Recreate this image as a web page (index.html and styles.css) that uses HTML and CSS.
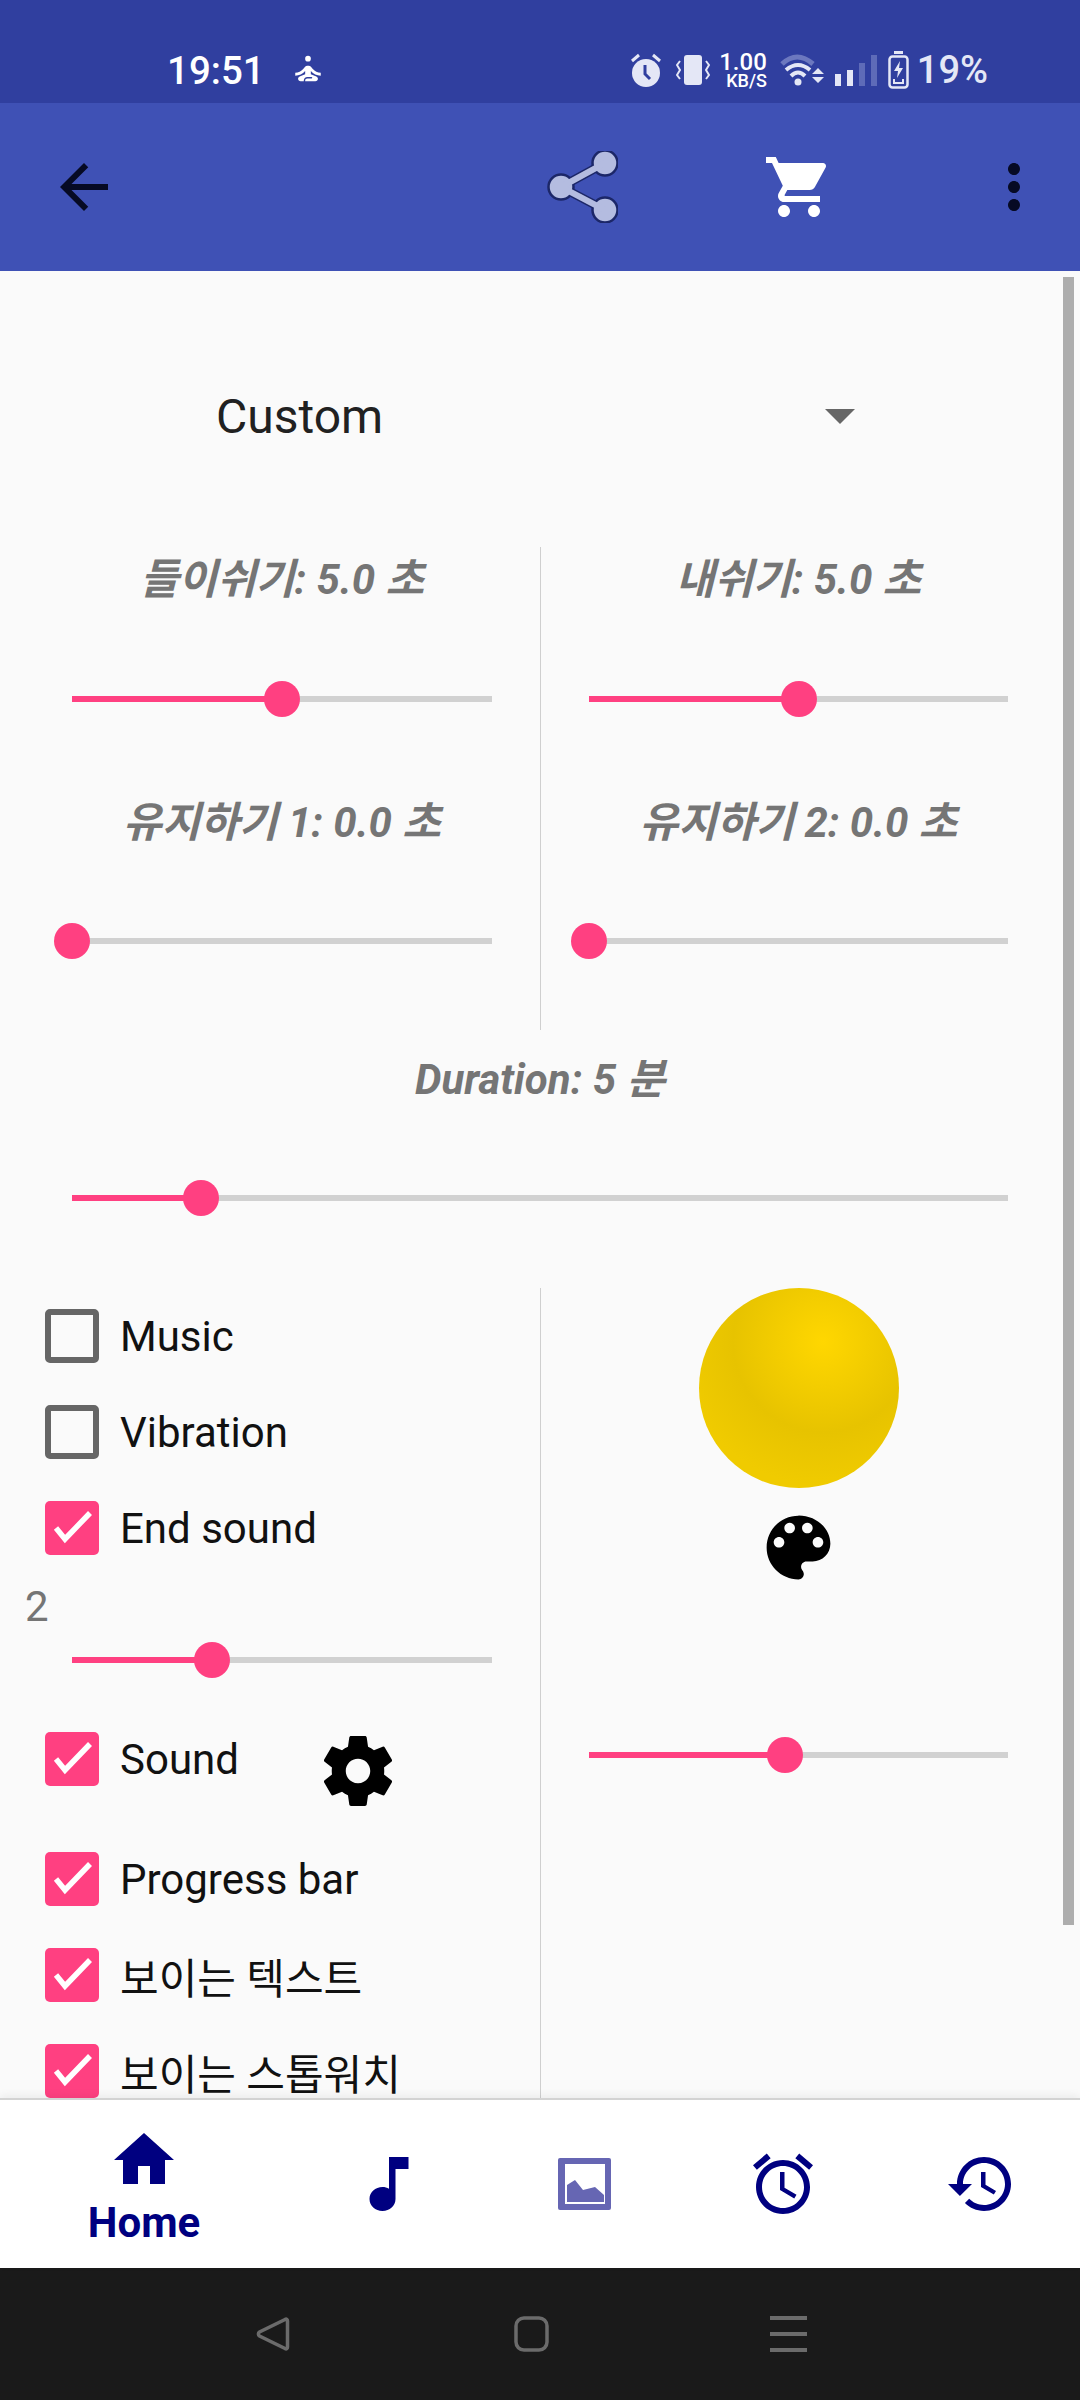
FILE: index.html
```html
<!DOCTYPE html>
<html lang="ko">
<head>
    <meta charset="UTF-8">
    <meta name="viewport" content="width=device-width, initial-scale=1.0">
    <title>Breathing</title>
    <link rel="stylesheet" href="styles.css">
</head>
<body>
    <div class="status">
        <div class="status-left">
            <span class="time">19:51</span>
            <svg class="ic-yoga" viewBox="0 0 24 24"><circle cx="12" cy="4" r="2"/><path d="M21 16v-2c-2.24 0-4.16-.96-5.6-2.68l-1.34-1.6C13.68 9.26 13.12 9 12.53 9h-1.05c-.59 0-1.15.26-1.53.72l-1.34 1.6C7.16 13.04 5.24 14 3 14v2c2.77 0 5.19-1.17 7-3.25V15l-3.88 1.55c-.67.27-1.12.93-1.12 1.66C5 19.2 5.8 20 6.79 20H9v-.5c0-1.38 1.12-2.5 2.5-2.5h3c.28 0 .5.22.5.5s-.22.5-.5.5h-3c-.83 0-1.5.67-1.5 1.5v.5h7.21c.99 0 1.79-.8 1.79-1.79 0-.73-.45-1.39-1.12-1.66L14 15v-2.25c1.81 2.08 4.23 3.25 7 3.25z"/></svg>
        </div>
        <div class="status-right">
            <svg class="ic-alarm" viewBox="0 0 32 34"><circle cx="16" cy="20" r="14"/><path d="M2 8l7-6M30 8l-7-6" fill="none" stroke="#e4e7f6" stroke-width="3"/><path d="M15 12v9l5 5" fill="none" stroke="#303f9f" stroke-width="3"/></svg>
            <svg class="ic-vibrate" viewBox="0 0 34 30"><rect x="8" y="0" width="18" height="30" rx="3"/><path d="M4 6L1 10l3 5-3 5 3 4M30 6l3 4-3 5 3 5-3 4" fill="none" stroke="#e4e7f6" stroke-width="2"/></svg>
            <div class="speed"><span class="speed-num">1.00</span><span class="speed-unit">KB/S</span></div>
            <svg class="ic-wifi" viewBox="0 0 44 33"><path d="M2 10Q17-4 33 10" fill="none" stroke="#6c78bf" stroke-width="5"/><path d="M6 16Q18 6 30 16" fill="none" stroke="#e4e7f6" stroke-width="4"/><path d="M11 22Q18 15 25 22" fill="none" stroke="#e4e7f6" stroke-width="4"/><circle cx="18" cy="28" r="3.500"/><path d="M32 20l6-6 6 6zM32 23l6 6 6-6z"/></svg>
            <svg class="ic-signal" viewBox="0 0 42 31"><rect x="0" y="19" width="6" height="12"/><rect x="12" y="15" width="6" height="16"/><rect class="dim" x="24" y="8" width="6" height="23"/><rect class="dim" x="36" y="0" width="6" height="31"/></svg>
            <svg class="ic-battery" viewBox="0 0 21 38"><path d="M6 1.5h9" stroke="#e4e7f6" stroke-width="3"/><rect x="1.5" y="5.5" width="18" height="31" rx="3" fill="none" stroke="#e4e7f6" stroke-width="2.5"/><path d="M12 10l-6 10h4l-1 7 6-10h-4z"/><path d="M6 28v4h9v-4" fill="none" stroke="#e4e7f6" stroke-width="2"/></svg>
            <span class="percent">19%</span>
        </div>
    </div>

    <div class="toolbar">
        <svg class="ic-72 ic-back" viewBox="0 0 24 24"><path d="M20 11H7.83l5.59-5.59L12 4l-8 8 8 8 1.41-1.41L7.83 13H20v-2z"/></svg>
        <div class="spacer"></div>
        <svg class="ic-72 ic-share" viewBox="0 0 72 72">
            <path class="share-line" d="M59 12L15 36l44 23"/>
            <circle cx="59" cy="12" r="12.500"/><circle cx="15" cy="36" r="12.500"/><circle cx="59" cy="59" r="12.500"/>
            <path class="share-fill" d="M59 12L15 36l44 23"/>
        </svg>
        <svg class="ic-72 ic-cart" viewBox="0 0 24 24"><path d="M7 18c-1.1 0-1.99.9-1.99 2S5.9 22 7 22s2-.9 2-2-.9-2-2-2zM1 2v2h2l3.6 7.59-1.35 2.45c-.16.28-.25.61-.25.96 0 1.1.9 2 2 2h12v-2H7.42c-.14 0-.25-.11-.25-.25l.03-.12.9-1.63h7.45c.75 0 1.41-.41 1.75-1.03l3.58-6.47c.08-.14.12-.31.12-.48 0-.55-.45-1-1-1H5.21l-.94-2H1zm16 16c-1.1 0-1.99.9-1.99 2s.89 2 1.99 2 2-.9 2-2-.9-2-2-2z"/></svg>
        <svg class="ic-72 ic-more" viewBox="0 0 24 24"><path d="M12 8c1.1 0 2-.9 2-2s-.9-2-2-2-2 .9-2 2 .9 2 2 2zm0 2c-1.1 0-2 .9-2 2s.9 2 2 2 2-.9 2-2-.9-2-2-2zm0 6c-1.1 0-2 .9-2 2s.9 2 2 2 2-.9 2-2-.9-2-2-2z"/></svg>
    </div>

    <div class="main">
        <div class="spinner">
            <span class="spinner-text">Custom</span>
            <span class="spinner-arrow"></span>
        </div>

        <div class="split">
            <div class="cell cell-left">
                <div class="value">들이쉬기: 5.0 초</div>
                <div class="slider"><div class="fill" style="width:210px"></div><div class="thumb"></div><div class="rest"></div></div>
                <div class="value value-next">유지하기 1: 0.0 초</div>
                <div class="slider"><div class="fill" style="width:0px"></div><div class="thumb"></div><div class="rest"></div></div>
            </div>
            <div class="cell cell-right">
                <div class="value">내쉬기: 5.0 초</div>
                <div class="slider"><div class="fill" style="width:210px"></div><div class="thumb"></div><div class="rest"></div></div>
                <div class="value value-next">유지하기 2: 0.0 초</div>
                <div class="slider"><div class="fill" style="width:0px"></div><div class="thumb"></div><div class="rest"></div></div>
            </div>
        </div>

        <div class="duration">
            <div class="value">Duration: 5 분</div>
            <div class="slider"><div class="fill" style="width:129px"></div><div class="thumb"></div><div class="rest"></div></div>
        </div>

        <div class="options">
            <div class="col-checks">
                <div class="row"><span class="box"></span><span class="row-text">Music</span></div>
                <div class="row"><span class="box"></span><span class="row-text">Vibration</span></div>
                <div class="row"><span class="box checked"><svg viewBox="0 0 54 54"><path d="M11 27l9 11 25-26"/></svg></span><span class="row-text">End sound</span></div>
                <div class="count">2</div>
                <div class="slider slider-count"><div class="fill" style="width:140px"></div><div class="thumb"></div><div class="rest"></div></div>
                <div class="row row-sound">
                    <span class="box checked"><svg viewBox="0 0 54 54"><path d="M11 27l9 11 25-26"/></svg></span><span class="row-text">Sound</span>
                    <svg class="ic-gear" viewBox="0 0 24 24"><path d="M19.43 12.98c.04-.32.07-.64.07-.98s-.03-.66-.07-.98l2.11-1.65c.19-.15.24-.42.12-.64l-2-3.46c-.12-.22-.39-.3-.61-.22l-2.49 1c-.52-.4-1.08-.73-1.69-.98l-.38-2.65C14.46 2.18 14.25 2 14 2h-4c-.25 0-.46.18-.49.42l-.38 2.65c-.61.25-1.17.59-1.69.98l-2.49-1c-.23-.09-.49 0-.61.22l-2 3.46c-.13.22-.07.49.12.64l2.11 1.65c-.04.32-.07.65-.07.98s.03.66.07.98l-2.11 1.65c-.19.15-.24.42-.12.64l2 3.46c.12.22.39.3.61.22l2.49-1c.52.4 1.08.73 1.69.98l.38 2.65c.03.24.24.42.49.42h4c.25 0 .46-.18.49-.42l.38-2.65c.61-.25 1.17-.59 1.69-.98l2.49 1c.23.09.49 0 .61-.22l2-3.46c.12-.22.07-.49-.12-.64l-2.11-1.65zM12 15.5c-1.93 0-3.5-1.57-3.5-3.5s1.57-3.5 3.5-3.5 3.5 1.57 3.5 3.5-1.57 3.5-3.5 3.5z"/></svg>
                </div>
                <div class="row"><span class="box checked"><svg viewBox="0 0 54 54"><path d="M11 27l9 11 25-26"/></svg></span><span class="row-text">Progress bar</span></div>
                <div class="row"><span class="box checked"><svg viewBox="0 0 54 54"><path d="M11 27l9 11 25-26"/></svg></span><span class="row-text">보이는 텍스트</span></div>
                <div class="row"><span class="box checked"><svg viewBox="0 0 54 54"><path d="M11 27l9 11 25-26"/></svg></span><span class="row-text">보이는 스톱워치</span></div>
            </div>
            <div class="col-ball">
                <div class="ball"></div>
                <svg class="ic-palette" viewBox="0 0 24 24"><path d="M12 3c-4.97 0-9 4.03-9 9s4.03 9 9 9c.83 0 1.5-.67 1.5-1.5 0-.39-.15-.74-.39-1.04-.23-.27-.38-.62-.38-1.01 0-.83.67-1.5 1.5-1.5H16c2.76 0 5-2.24 5-5 0-4.42-4.03-8-9-8zm-5.5 9c-.83 0-1.5-.67-1.5-1.5S5.67 9 6.5 9 8 9.67 8 10.5 7.33 12 6.5 12zm3-4C8.67 8 8 7.33 8 6.5S8.67 5 9.5 5s1.5.67 1.5 1.5S10.33 8 9.5 8zm5 0c-.83 0-1.5-.67-1.5-1.5S13.67 5 14.5 5s1.5.67 1.5 1.5S15.33 8 14.5 8zm3 4c-.83 0-1.5-.67-1.5-1.5S16.67 9 17.5 9s1.5.67 1.5 1.5-.67 1.5-1.5 1.5z"/></svg>
                <div class="slider slider-ball"><div class="fill" style="width:196px"></div><div class="thumb"></div><div class="rest"></div></div>
            </div>
        </div>

        <div class="scrollbar"></div>
    </div>

    <div class="tabs">
        <div class="tab tab-home">
            <svg class="ic-72" viewBox="0 0 24 24"><path d="M10 20v-6h4v6h5v-8h3L12 3 2 12h3v8z"/></svg>
            <span class="tab-text">Home</span>
        </div>
        <div class="tab">
            <svg class="ic-72 ic-music" viewBox="0 0 24 24" preserveAspectRatio="none"><path d="M12 3v10.55c-.59-.34-1.27-.55-2-.55-2.21 0-4 1.79-4 4s1.79 4 4 4 4-1.79 4-4V7h4V3h-6z"/></svg>
        </div>
        <div class="tab">
            <svg class="ic-72 ic-image" viewBox="0 0 72 72">
                <rect x="9" y="10" width="53" height="52" rx="2"/>
                <rect class="image-paper" x="16" y="16" width="40" height="40"/>
                <path d="M18 37l8-5 8 10 12-3 9 8v7H18z"/>
            </svg>
        </div>
        <div class="tab">
            <svg class="ic-72" viewBox="0 0 24 24"><path d="M22 5.72l-4.6-3.86-1.29 1.53 4.6 3.86L22 5.72zM7.88 3.39L6.6 1.86 2 5.71l1.29 1.53 4.59-3.85zM12.5 8H11v6l4.75 2.85.75-1.23-4-2.37V8zM12 4c-4.97 0-9 4.03-9 9s4.03 9 9 9 9-4.03 9-9-4.03-9-9-9zm0 16c-3.87 0-7-3.13-7-7s3.13-7 7-7 7 3.13 7 7-3.13 7-7 7z"/></svg>
        </div>
        <div class="tab">
            <svg class="ic-72" viewBox="0 0 24 24"><path d="M13 3c-4.97 0-9 4.03-9 9H1l3.89 3.89.07.14L9 12H6c0-3.87 3.13-7 7-7s7 3.13 7 7-3.13 7-7 7c-1.93 0-3.68-.79-4.94-2.06l-1.42 1.42C8.27 19.99 10.51 21 13 21c4.97 0 9-4.03 9-9s-4.03-9-9-9zm-1 5v5l4.28 2.54.72-1.21-3.5-2.08V8H12z"/></svg>
        </div>
    </div>

    <div class="navbar">
        <svg class="nav-back" viewBox="0 0 34 34"><path d="M29 2.5c1.5-1 2.5 0 2.500 1.500v26c0 1.500-1 2.500-2.500 1.500L3.500 19c-1.500-1-1.500-3 0-4z"/></svg>
        <svg class="nav-home" viewBox="0 0 35 36"><rect x="2" y="2" width="31" height="32" rx="8"/></svg>
        <div class="nav-menu"><span></span><span></span><span></span></div>
    </div>
</body>
</html>
```

FILE: styles.css
```css
/* Base */
* {
    box-sizing: border-box;
}

html, body {
    margin: 0;
    padding: 0;
}

body {
    width: 1080px;
    height: 2400px;
    overflow: hidden;
    background-color: #fafafa;
    font-family: Roboto, "Noto Sans CJK KR", sans-serif;
}

svg {
    display: block;
    flex: none;
}

.ic-72 {
    width: 72px;
    height: 72px;
}

/* Status bar */
.status {
    display: flex;
    align-items: center;
    justify-content: space-between;
    height: 103px;
    padding: 37px 92px 0 167px;
    background-color: #303f9f;
    color: #e4e7f6;
}

.status-left {
    display: flex;
    align-items: center;
}

.status-right {
    display: flex;
    align-items: center;
}

.time {
    font-size: 38.5px;
    font-weight: 500;
    color: #fff;
}

.ic-yoga {
    width: 34px;
    height: 34px;
    margin-left: 26px;
    fill: #fff;
}

.ic-alarm {
    width: 32px;
    height: 34px;
    fill: #e4e7f6;
}

.ic-vibrate {
    width: 34px;
    height: 30px;
    margin-left: 14px;
    fill: #e4e7f6;
}

.speed {
    display: flex;
    flex-direction: column;
    align-items: flex-end;
    width: 46px;
    margin-left: 11px;
    color: #fff;
    font-weight: 500;
}

.speed-num {
    font-size: 24px;
    line-height: 20px;
}

.speed-unit {
    font-size: 18px;
    line-height: 17px;
}

.ic-wifi {
    width: 44px;
    height: 33px;
    margin-left: 13px;
    fill: #e4e7f6;
}

.ic-signal {
    width: 42px;
    height: 31px;
    margin-left: 11px;
    fill: #e4e7f6;
}

.ic-signal .dim {
    fill: #5e6bb8;
}

.ic-battery {
    width: 21px;
    height: 38px;
    margin-left: 11px;
    fill: #e4e7f6;
}

.percent {
    margin-left: 8px;
    font-size: 38px;
    font-weight: 500;
}

/* Toolbar */
.toolbar {
    display: flex;
    align-items: center;
    height: 168px;
    padding: 0 30px 0 48px;
    background-color: #3f51b5;
}

.spacer {
    flex: 1;
}

.ic-back {
    fill: #060a24;
}

.ic-share {
    margin-right: 145px;
    fill: #b4bce0;
    stroke: #1c2768;
    stroke-width: 2.5px;
}

.share-line {
    fill: none;
    stroke-width: 9px;
}

.share-fill {
    fill: none;
    stroke: #b4bce0;
    stroke-width: 6px;
}

.ic-cart {
    margin-right: 143px;
    fill: #fff;
}

.ic-more {
    fill: #060a24;
}

/* Scrolling content */
.main {
    position: relative;
    height: 1827px;
    overflow: hidden;
    background-color: #fafafa;
}

.scrollbar {
    position: absolute;
    top: 6px;
    right: 6px;
    width: 11px;
    height: 1648px;
    background-color: #adadad;
}

.spinner {
    display: flex;
    align-items: center;
    justify-content: space-between;
    height: 100px;
    margin: 95px 225px 81px 216px;
}

.spinner-text {
    font-size: 48px;
    color: #212121;
}

.spinner-arrow {
    width: 0;
    height: 0;
    border-left: 15px solid transparent;
    border-right: 15px solid transparent;
    border-top: 15px solid #666;
}

.split {
    display: flex;
    height: 483px;
}

.cell {
    flex: 1;
}

.cell-left {
    width: 540px;
    flex: none;
    padding: 0 48px 0 72px;
}

.cell-right {
    border-left: 1px solid #cfcfcf;
    padding: 0 72px 0 48px;
}

.value {
    height: 66px;
    margin-bottom: 68px;
    font-size: 42px;
    font-weight: 700;
    font-style: italic;
    line-height: 66px;
    text-align: center;
    white-space: nowrap;
    color: #757575;
}

.value-next {
    margin-top: 73px;
    margin-bottom: 67px;
}

/* Slider */
.slider {
    display: flex;
    align-items: center;
    height: 36px;
}

.fill {
    flex: none;
    height: 6px;
    background-color: #ff4081;
}

.thumb {
    position: relative;
    flex: none;
    width: 36px;
    height: 36px;
    margin: 0 -18px;
    border-radius: 50%;
    background-color: #ff4081;
}

.rest {
    flex: 1;
    height: 6px;
    background-color: #d1d1d1;
}

.duration {
    height: 258px;
    padding: 17px 72px 0;
}

.duration .value {
    margin-bottom: 67px;
}

/* Options */
.options {
    display: flex;
    height: 900px;
}

.col-checks {
    flex: none;
    width: 540px;
    padding: 21px 48px 0 45px;
}

.col-ball {
    flex: 1;
    display: flex;
    flex-direction: column;
    align-items: center;
    padding: 0 72px 0 48px;
    border-left: 1px solid #cfcfcf;
}

.row {
    display: flex;
    align-items: center;
    height: 54px;
    margin-bottom: 42px;
}

.row-sound {
    margin-bottom: 66px;
}

.box {
    flex: none;
    width: 54px;
    height: 54px;
    border: 6px solid #666;
    border-radius: 5px;
}

.box.checked {
    border: 0;
    background-color: #ff4081;
}

.box svg {
    width: 54px;
    height: 54px;
    fill: none;
    stroke: #fff;
    stroke-width: 5.5px;
}

.row-text {
    margin-left: 21px;
    font-size: 42px;
    white-space: nowrap;
    color: #111;
}

.ic-gear {
    width: 84px;
    height: 84px;
    margin-left: 77px;
    align-self: flex-start;
    margin-top: -3px;
    fill: #000;
}

.count {
    height: 20px;
    margin-left: -20px;
    font-size: 42px;
    line-height: 20px;
    color: #757575;
}

.slider-count {
    margin: 25px 0 54px 27px;
}

.ball {
    width: 200px;
    height: 200px;
    margin-bottom: 17px;
    border-radius: 50%;
    background: radial-gradient(circle at 62% 27%, #ffd700 0, #e7c300 47%, #f0cb00 75%);
}

.ic-palette {
    width: 85px;
    height: 85px;
    margin-bottom: 147px;
    fill: #000;
}

.slider-ball {
    align-self: stretch;
}

/* Bottom tabs */
.tabs {
    position: relative;
    display: flex;
    height: 170px;
    border-top: 2px solid #d3d3d3;
    background-color: #fff;
    box-shadow: 0 -3px 8px rgba(0, 0, 0, 0.06);
}

.tab {
    display: flex;
    flex-direction: column;
    align-items: center;
    flex: none;
    width: 198px;
    padding-top: 48px;
    fill: #000080;
}

.tab-home {
    width: 288px;
    padding-top: 24px;
}

.tab-text {
    font-size: 42px;
    font-weight: 700;
    line-height: 54px;
    color: #000080;
}

.ic-music {
    width: 78px;
    margin-left: 3px;
}

.ic-image {
    fill: #6666b3;
}

.image-paper {
    fill: #fff;
}

/* System navigation */
.navbar {
    display: flex;
    align-items: center;
    height: 132px;
    padding-left: 256px;
    background-color: #1a1a1a;
}

.nav-back {
    width: 34px;
    height: 34px;
    fill: none;
    stroke: #6b6b6b;
    stroke-width: 3.5px;
}

.nav-home {
    width: 35px;
    height: 36px;
    margin-left: 224px;
    fill: none;
    stroke: #6b6b6b;
    stroke-width: 3.5px;
}

.nav-menu {
    display: flex;
    flex-direction: column;
    gap: 12px;
    margin-left: 221px;
}

.nav-menu span {
    display: block;
    width: 37px;
    height: 4px;
    background-color: #6b6b6b;
}
```
